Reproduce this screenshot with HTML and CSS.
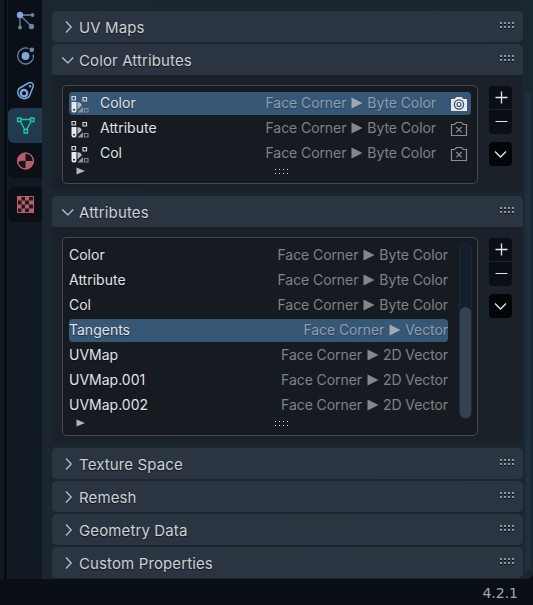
FILE: index.html
```html
<!DOCTYPE html>
<html lang="en">
<head>
<meta charset="utf-8">
<title>Properties</title>
<link rel="stylesheet" href="styles.css">
</head>
<body>
<svg class="defs" width="0" height="0">
  <defs>
    <symbol id="right" viewBox="0 0 14 14"><path d="M5 1.500 10.200 7 5 12.500" fill="none" stroke="currentColor" stroke-width="1.2"/></symbol>
    <symbol id="down" viewBox="0 0 14 14"><path d="M1.300 4.500 6.800 10l5.500-5.500" fill="none" stroke="currentColor" stroke-width="1.2"/></symbol>
    <symbol id="grip" viewBox="0 0 15 8"><path d="M0 1h2v2H0zM4 1h2v2H4zM8 1h2v2H8zM12 1h2v2h-2zM0 5h2v2H0zM4 5h2v2H4zM8 5h2v2H8zM12 5h2v2h-2z" fill="#0b1016"/><path d="M0 0h2v2H0zM4 0h2v2H4zM8 0h2v2H8zM12 0h2v2h-2zM0 4h2v2H0zM4 4h2v2H4zM8 4h2v2H8zM12 4h2v2h-2z" fill="#8f969f"/></symbol>
    <symbol id="resize" viewBox="0 0 14 6"><path d="M0 0h1v1H0zM4 0h1v1H4zM8 0h1v1H8zM12 0h1v1h-1zM0 4h1v1H0zM4 4h1v1H4zM8 4h1v1H8zM12 4h1v1h-1z" fill="#d5d8db"/></symbol>
    <symbol id="arrow" viewBox="0 0 12 12"><path d="M.5.5 11.500 6 .5 11.500z" fill="currentColor"/></symbol>
    <symbol id="attr" viewBox="0 0 18 18">
      <path d="M1 1.500h3.500V5H1zM12 2.500h3.500V6H12z" fill="none" stroke="#d3d7db" stroke-width="1.200"/>
      <path d="M.5 7h5v8.500a2 2 0 0 1-2 2h-1a2 2 0 0 1-2-2z" fill="#e6e8ea"/><circle cx="3" cy="14.800" r="1" fill="#161c24"/>
      <path d="M6.500 7c2.300.3 4 1.600 4.300 3.300L6.500 14.500z" fill="#b6bbc0"/>
      <path d="m12 12-5.500 5.500H12z" fill="#90969d"/>
      <path d="M13.500 13.500H17V17h-3.500z" fill="none" stroke="#7f868d" stroke-width="1.200"/>
    </symbol>
    <symbol id="cam-on" viewBox="0 0 18 16"><path d="M1 3h3.500l2-2h5l2 2H17v12H1z" fill="#e6e8ea"/><circle cx="9" cy="8.500" r="4.600" fill="none" stroke="#365575" stroke-width="1.300"/><circle cx="9" cy="8.500" r="2" fill="none" stroke="#365575" stroke-width="1.100"/></symbol>
    <symbol id="cam-off" viewBox="0 0 18 16"><path d="M1.500 3.500h3l2-2h5l2 2h3v11h-15zM6.300 6l5.400 5.400M11.700 6l-5.400 5.400" fill="none" stroke="#8a8e92" stroke-width="1.200"/></symbol>
    <symbol id="tri" viewBox="0 0 10 8"><path d="M.5.500 9 4 .5 7.500z" fill="#b4b7ba"/></symbol>
  </defs>
</svg>
<div class="app">
  <div class="main">
    <div class="edge"></div>
    <nav class="tabs">
      <div class="group">
        <div class="tab"><svg width="20" height="20" viewBox="0 0 20 20"><path d="M4 4h12M4 4v12M4 4l12 12" stroke="#6884a9" stroke-width="1.300"/><circle cx="4" cy="4" r="3.200" fill="#7ea6df"/><g fill="#6884a9"><circle cx="16.500" cy="4" r="1.900"/><circle cx="4" cy="16.500" r="1.900"/><circle cx="15.500" cy="15.500" r="2.700"/></g></svg></div>
        <div class="tab"><svg width="20" height="20" viewBox="0 0 20 20"><path d="M12.500 2.500A8 8 0 1 0 17 13M17.300 8.500v4" fill="none" stroke="#6884a9" stroke-width="1.300"/><circle cx="9.500" cy="10" r="3.900" fill="#7ea6df"/><circle cx="15.800" cy="3.800" r="2.400" fill="#6884a9"/></svg></div>
        <div class="tab"><svg width="20" height="20" viewBox="0 0 20 20"><path d="M3 7.500 12.500 2c3-1.500 5.500 1 4.500 4l-3.500 9A6.200 6.200 0 1 1 3 7.500z" fill="none" stroke="#7ea6df" stroke-width="1.500"/><circle cx="8" cy="12.200" r="3.200" fill="none" stroke="#7ea6df" stroke-width="2.300"/><circle cx="14" cy="5.200" r="1.200" fill="#7ea6df"/></svg></div>
        <div class="tab active"><svg width="20" height="20" viewBox="0 0 20 20"><path d="M5 3.500h9M4.300 5.500l4.500 8M15 5.500l-4.300 8M1.500 2H5v3.500H1.500zM14.500 2H18v3.500h-3.500zM8 13.500h3.500V17H8z" fill="none" stroke="#16cda5" stroke-width="1.300"/></svg></div>
        <div class="tab"><svg width="20" height="20" viewBox="0 0 20 20"><circle cx="9.500" cy="10" r="8" fill="#b65f69"/><path d="M9.500 10V2.500A7.500 7.500 0 0 1 17 10zM9.500 10v7.500A7.500 7.500 0 0 1 2 11q4-2 7.500-1z" fill="#15131a"/><circle cx="9.500" cy="10" r="8" fill="none" stroke="#b65f69" stroke-width="1.300"/></svg></div>
      </div>
      <div class="group">
        <div class="tab"><svg width="20" height="20" viewBox="0 0 20 20"><path d="M1 1h17v17H1z" fill="#b65f69"/><path d="M5.500 2h3.500v3.500H5.500zM13 2h4v3.500h-4zM2 5.500h3.500v4H2zM9 5.500h4v4H9zM5.500 9.500H9v4H5.500zM13 9.500h4v4h-4zM2 13.500h3.500V17H2zM9 13.500h4V17H9z" fill="#25171f"/></svg></div>
      </div>
    </nav>
    <main class="panels">
      <section class="panel"><header class="head"><svg class="chev"><use href="#right"/></svg><h2 class="title">UV Maps</h2><svg class="grip"><use href="#grip"/></svg></header></section>
      <section class="panel open">
        <header class="head"><svg class="chev"><use href="#down"/></svg><h2 class="title">Color Attributes</h2><svg class="grip"><use href="#grip"/></svg></header>
        <div class="body">
          <div class="box">
            <div class="rows">
              <div class="row color-row selected"><svg class="attr"><use href="#attr"/></svg><span class="name">Color</span><span class="type">Face Corner<svg class="arrow"><use href="#arrow"/></svg>Byte Color</span><svg class="cam"><use href="#cam-on"/></svg></div>
              <div class="row color-row"><svg class="attr"><use href="#attr"/></svg><span class="name">Attribute</span><span class="type">Face Corner<svg class="arrow"><use href="#arrow"/></svg>Byte Color</span><svg class="cam"><use href="#cam-off"/></svg></div>
              <div class="row color-row"><svg class="attr"><use href="#attr"/></svg><span class="name">Col</span><span class="type">Face Corner<svg class="arrow"><use href="#arrow"/></svg>Byte Color</span><svg class="cam"><use href="#cam-off"/></svg></div>
            </div>
            <div class="foot"><svg class="tri"><use href="#tri"/></svg><svg class="resize"><use href="#resize"/></svg></div>
          </div>
          <div class="tools">
            <div class="pair"><button class="btn"><svg width="14" height="14"><path d="M1.500 6.500h12M7.500.5v12" stroke="#e6e6e6" stroke-width="1.300"/></svg></button><button class="btn"><svg width="14" height="14"><path d="M1.500 6.500h12" stroke="#e6e6e6" stroke-width="1.200"/></svg></button></div>
            <button class="btn menu"><svg width="14" height="14"><path d="M1 4.500 6.500 10 12 4.500" fill="none" stroke="#e6e6e6" stroke-width="1.400"/></svg></button>
          </div>
        </div>
      </section>
      <section class="panel open">
        <header class="head"><svg class="chev"><use href="#down"/></svg><h2 class="title">Attributes</h2><svg class="grip"><use href="#grip"/></svg></header>
        <div class="body">
          <div class="box">
            <div class="scroller">
              <div class="rows">
                <div class="row"><span class="name">Color</span><span class="type">Face Corner<svg class="arrow"><use href="#arrow"/></svg>Byte Color</span></div>
                <div class="row"><span class="name">Attribute</span><span class="type">Face Corner<svg class="arrow"><use href="#arrow"/></svg>Byte Color</span></div>
                <div class="row"><span class="name">Col</span><span class="type">Face Corner<svg class="arrow"><use href="#arrow"/></svg>Byte Color</span></div>
                <div class="row selected"><span class="name">Tangents</span><span class="type">Face Corner<svg class="arrow"><use href="#arrow"/></svg>Vector</span></div>
                <div class="row"><span class="name">UVMap</span><span class="type">Face Corner<svg class="arrow"><use href="#arrow"/></svg>2D Vector</span></div>
                <div class="row"><span class="name">UVMap.001</span><span class="type">Face Corner<svg class="arrow"><use href="#arrow"/></svg>2D Vector</span></div>
                <div class="row"><span class="name">UVMap.002</span><span class="type">Face Corner<svg class="arrow"><use href="#arrow"/></svg>2D Vector</span></div>
              </div>
              <div class="track"><div class="thumb"></div></div>
            </div>
            <div class="foot"><svg class="tri"><use href="#tri"/></svg><svg class="resize"><use href="#resize"/></svg></div>
          </div>
          <div class="tools">
            <div class="pair"><button class="btn"><svg width="14" height="14"><path d="M1.500 6.500h12M7.500.5v12" stroke="#e6e6e6" stroke-width="1.300"/></svg></button><button class="btn"><svg width="14" height="14"><path d="M1.500 6.500h12" stroke="#e6e6e6" stroke-width="1.200"/></svg></button></div>
            <button class="btn menu"><svg width="14" height="14"><path d="M1 4.500 6.500 10 12 4.500" fill="none" stroke="#e6e6e6" stroke-width="1.400"/></svg></button>
          </div>
        </div>
      </section>
      <section class="panel"><header class="head"><svg class="chev"><use href="#right"/></svg><h2 class="title">Texture Space</h2><svg class="grip"><use href="#grip"/></svg></header></section>
      <section class="panel"><header class="head"><svg class="chev"><use href="#right"/></svg><h2 class="title">Remesh</h2><svg class="grip"><use href="#grip"/></svg></header></section>
      <section class="panel"><header class="head"><svg class="chev"><use href="#right"/></svg><h2 class="title">Geometry Data</h2><svg class="grip"><use href="#grip"/></svg></header></section>
      <section class="panel"><header class="head"><svg class="chev"><use href="#right"/></svg><h2 class="title">Custom Properties</h2><svg class="grip"><use href="#grip"/></svg></header></section>
    </main>
    <div class="page-scroll"><div class="page-thumb"></div></div>
  </div>
  <footer class="status">4.2.1</footer>
</div>
</body>
</html>
```

FILE: styles.css
```css
* { box-sizing: border-box; }
body { margin: 0; background: #0a0e15; font-family: Inter, "Liberation Sans", sans-serif; color: #e1e3e5; }
svg { display: block; flex: none; }
.defs { position: absolute; }
.app { width: 533px; height: 605px; display: flex; flex-direction: column; overflow: hidden; }
.main { height: 579px; display: flex; background: #192731; border-bottom-right-radius: 6px; overflow: hidden; }
.edge { width: 8px; background: linear-gradient(90deg, #111920 0 4px, #080c12 4px 7px, #12202a 7px); }
.tabs { width: 34px; background: #111a23; display: flex; flex-direction: column; gap: 9px; }
.group { background: #0b1018; border-radius: 0 0 0 6px; }
.group + .group { border-radius: 6px 0 0 6px; }
.tab { height: 35px; display: flex; align-items: center; padding-left: 8px; }
.group:first-child .tab:first-child { height: 38px; padding-top: 4px; }
.active { background: #213a50; border-radius: 6px 0 0 6px; }
.panels { width: 481px; padding: 11px 0 0 10px; display: flex; flex-direction: column; gap: 2px; background: linear-gradient(90deg, #1a2630, #1b252e); }
.panel { border-radius: 5px; overflow: hidden; background: #2b3542; flex: none; }
.open { background: #1b2128; }
.open + .panel { margin-top: 3px; }
.head { height: 31px; display: flex; align-items: center; background: #2b3542; padding: 0 8px 0 9px; }
.chev { width: 14px; height: 14px; margin-top: 1px; color: #c0c5ca; }
.title { margin: 0 auto 0 4px; font-size: 15px; letter-spacing: .12px; line-height: 20px; font-weight: 400; color: #cdd1d6; text-shadow: 0 1px 1px #10161d; padding-top: 2px; white-space: nowrap; }
.grip { width: 15px; height: 8px; margin-top: -1px; }
.body { display: flex; gap: 11px; padding: 10px 10px 7px; }
.box { width: 416px; border: 1px solid #45494d; border-radius: 5px; background: #161b22; padding: 6px; }
.rows { display: flex; flex-direction: column; gap: 2px; flex: 1; }
.row { height: 23px; display: flex; align-items: center; font-size: 14px; white-space: nowrap; border-radius: 4px; }
.selected { background: #365776; }
.color-row { padding: 0 3px 0 2px; }
.attr { width: 18px; height: 18px; margin-right: 11px; }
.name { padding-bottom: 2px; text-shadow: 0 1px 1px #0008; }
.type { margin-left: auto; padding-bottom: 2px; display: flex; align-items: center; letter-spacing: -.08px; color: #7f8286; }
.selected .type { color: #8c9eb0; text-shadow: 0 1px 1px #0004; }
.arrow { width: 12px; height: 12px; margin: 0 4px 0 5px; color: #85878a; }
.selected .arrow { color: #a2a9b0; }
.cam { width: 18px; height: 16px; margin-left: 14px; }
.foot { height: 12px; display: flex; align-items: flex-start; }
.tri { width: 10px; height: 8px; margin: 2px 0 0 7px; }
.resize { width: 14px; height: 6px; margin: 4px auto 0 189px; }
.tools { width: 23px; display: flex; flex-direction: column; gap: 8px; padding-top: 1px; }
.pair { display: flex; flex-direction: column; gap: 1px; border-radius: 4px; overflow: hidden; background: #1b232c; }
.btn { width: 23px; height: 24px; border: 0; padding: 0; display: flex; align-items: center; justify-content: center; background: #0b0f15; }
.btn:first-child:not(.menu) { height: 23px; }
.menu { border-radius: 4px; background: #030609; }
.scroller { display: flex; height: 173px; }
.scroller .rows { flex: none; width: 379px; }
.track { width: 13px; height: 176px; margin: -1px 0 0 11px; border-radius: 7px; background: #131f2a; border: 1px solid #1d2a35; display: flex; align-items: flex-end; }
.thumb { width: 11px; height: 111px; border-radius: 6px; background: #344251; }
.page-scroll { width: 8px; padding-top: 92px; }
.page-thumb { width: 6px; height: 479px; margin-left: 2px; border-radius: 4px; background: #1e2e3c; }
.status { height: 26px; background: #0a0e15; color: #a3a7ab; font-family: "DejaVu Sans", sans-serif; font-size: 14px; line-height: 28px; text-align: right; padding-right: 15px; }
```
